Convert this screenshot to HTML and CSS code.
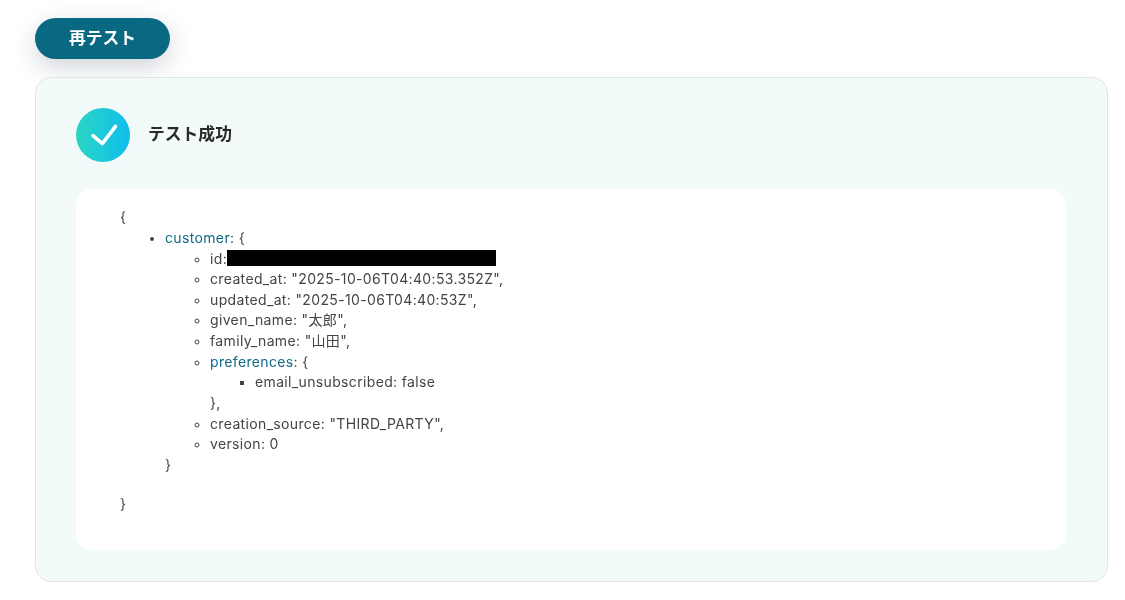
FILE: index.html
```html
<!DOCTYPE html>
<html lang="ja">
<head>
<meta charset="utf-8">
<title>テスト成功</title>
<link rel="stylesheet" href="styles.css">
</head>
<body>
<main class="page">
  <button class="retest" type="button">再テスト</button>
  <section class="card">
    <header class="status">
      <span class="status-icon">
        <svg width="54" height="54" viewBox="0 0 54 54" aria-hidden="true"><path d="M17 27.7 L26.300 35.700 L39.500 18.300" fill="none" stroke="#fff" stroke-width="3.600" stroke-linecap="round" stroke-linejoin="round"/></svg>
      </span>
      <h1 class="status-title">テスト成功</h1>
    </header>
    <div class="result">
      <div class="line">{</div>
      <ul class="level1">
        <li><span class="key">customer</span>: {
          <ul class="level2">
            <li>id:<span class="redacted"></span></li>
            <li>created_at: "2025-10-06T04:40:53.352Z",</li>
            <li>updated_at: "2025-10-06T04:40:53Z",</li>
            <li>given_name: "太郎",</li>
            <li>family_name: "山田",</li>
            <li><span class="key">preferences</span>: {
              <ul class="level3">
                <li>email_unsubscribed: false</li>
              </ul>
              },
            </li>
            <li>creation_source: "THIRD_PARTY",</li>
            <li>version: 0</li>
          </ul>
          }
        </li>
      </ul>
      <div class="line closing">}</div>
    </div>
  </section>
</main>
</body>
</html>
```
FILE: styles.css
```css
* { box-sizing: border-box; }
html, body { margin: 0; padding: 0; background: #fff; }
body {
  font-family: Inter, "Noto Sans CJK JP", sans-serif;
  color: #444;
}
.page {
  padding: 18px 17px 0 35px;
  will-change: transform;
}
.retest {
  display: block;
  width: 135px;
  height: 41px;
  border: 0;
  border-radius: 21px;
  background: #0a6982;
  color: #fff;
  font-family: inherit;
  font-size: 16.8px;
  font-weight: 700;
  box-shadow: 0 8px 24px rgba(40, 60, 80, 0.22);
  padding: 0 0 4px;
}
.card {
  margin-top: 18px;
  height: 505px;
  background: #f3fafa;
  border: 1px solid #e1e5e6;
  border-radius: 16px;
  padding: 30px 41px 30px 40px;
}
.status {
  display: flex;
  align-items: center;
  gap: 18px;
  height: 54px;
}
.status-icon {
  display: block;
  width: 54px;
  height: 54px;
  border-radius: 50%;
  background: linear-gradient(90deg, #2ad6c4, #10bdec);
}
.status-icon svg { display: block; }
.status-title {
  margin: 0;
  padding-bottom: 4px;
  font-size: 16.8px;
  font-weight: 700;
  color: #2a2a2a;
}
.result {
  margin-top: 27px;
  height: 361px;
  background: #fff;
  border-radius: 16px;
  padding: 18.2px 44px;
  font-size: 14px;
  letter-spacing: 0.35px;
  line-height: 20.65px;
}
.result ul { margin: 0; padding-left: 45px; }
.result li::marker { font-size: 13px; }
.level1 { list-style: disc; }
.level2 { list-style: circle; }
.level3 { list-style: square; }
.key { color: #0e6a86; }
.redacted {
  display: inline-block;
  width: 269px;
  height: 16px;
  background: #000;
  vertical-align: -2px;
}
.closing { margin-top: 18.4px; }
```
